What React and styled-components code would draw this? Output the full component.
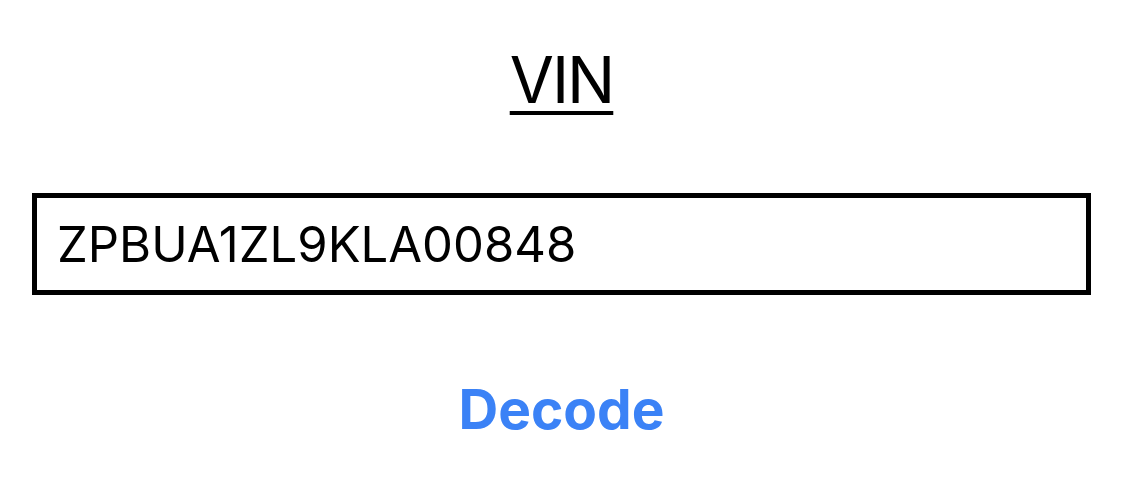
import React from "react";
import styled, { createGlobalStyle } from "styled-components";

const Global = createGlobalStyle`
  html, body { margin: 0; padding: 0; background: #fff; }
  body { font-family: Inter, "Liberation Sans", Arial, sans-serif; }
`;

const Page = styled.div`
  width: 1134px;
  height: 488px;
  display: flex;
  flex-direction: column;
  align-items: center;
  box-sizing: border-box;
  padding: 42px 43px 0 32px;
`;

const Title = styled.h1`
  margin: 0;
  font-family: Inter, "Liberation Sans", Arial, sans-serif;
  font-weight: 400;
  font-size: 64px;
  line-height: 75px;
  letter-spacing: -2px;
  color: #000;
  text-decoration: underline;
  text-decoration-thickness: 4px;
  text-underline-offset: 8px;
`;

const Field = styled.input`
  margin-top: 76px;
  width: 100%;
  height: 102px;
  box-sizing: border-box;
  border: 5px solid #000;
  border-radius: 0;
  padding: 0 0 0 20px;
  font-family: Inter, "Liberation Sans", Arial, sans-serif;
  font-size: 49px;
  color: #000;
  background: #fff;
  outline: none;
`;

const Action = styled.button`
  margin-top: 84px;
  border: none;
  background: none;
  padding: 0;
  font-family: Inter, "Liberation Sans", Arial, sans-serif;
  font-weight: 700;
  font-size: 55px;
  line-height: 60px;
  color: #3b82f6;
  cursor: pointer;
`;

export default function App() {
  return (
    <>
      <Global />
      <Page>
        <Title>VIN</Title>
        <Field defaultValue="ZPBUA1ZL9KLA00848" />
        <Action>Decode</Action>
      </Page>
    </>
  );
}
